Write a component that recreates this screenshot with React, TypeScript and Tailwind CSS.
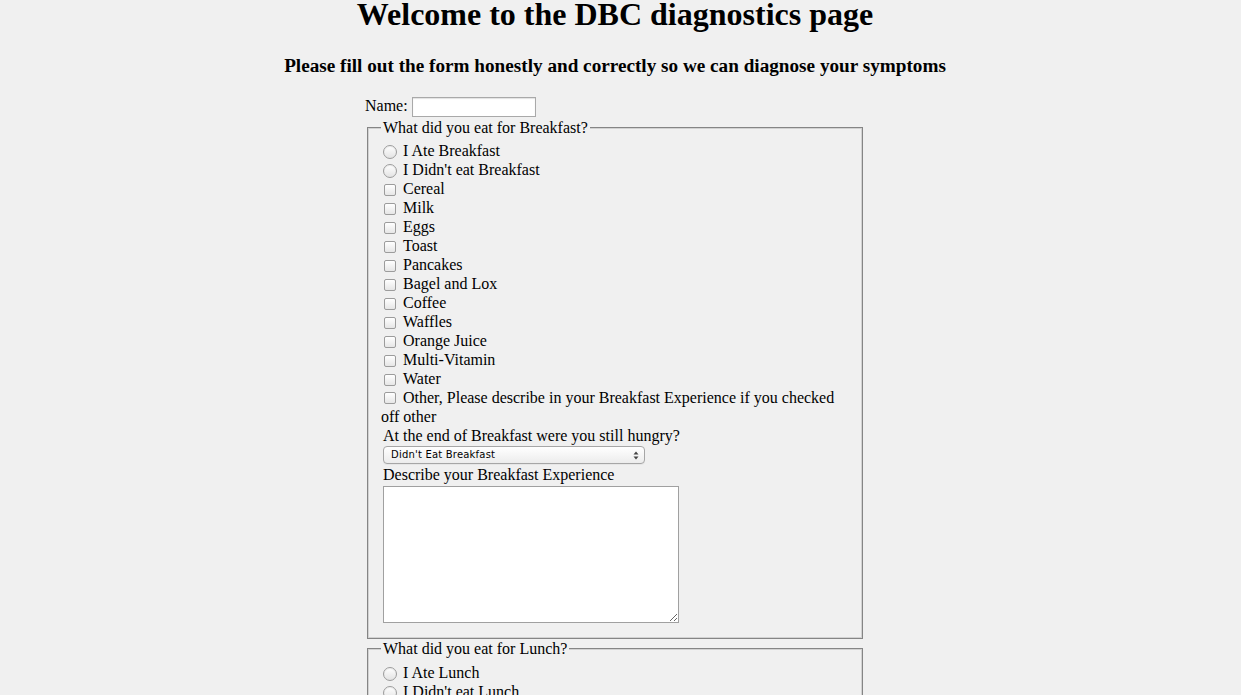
import React from "react";

const serif = { fontFamily: '"Liberation Serif", "Times New Roman", serif' };

function Radio() {
  return (
    <span className="w-[22px] h-[19px] flex items-center shrink-0">
      <span className="ml-[2px] mt-[2px] w-[14px] h-[14px] rounded-full border border-[#9c9c9c] bg-[linear-gradient(#ffffff,#e3e3e3)] shadow-[inset_0_1px_1px_rgba(0,0,0,0.08)]" />
    </span>
  );
}

function Check() {
  return (
    <span className="w-[22px] h-[19px] flex items-center shrink-0">
      <span className="ml-[3px] mt-[2px] w-[12px] h-[12px] rounded-[2px] border border-[#9c9c9c] bg-[linear-gradient(#ffffff,#e6e6e6)]" />
    </span>
  );
}

function Row({ kind, label }: { kind: "radio" | "check"; label: string }) {
  return (
    <div className="flex items-start leading-[19px]">
      {kind === "radio" ? <Radio /> : <Check />}
      <span>{label}</span>
    </div>
  );
}

const breakfastItems = [
  "Cereal",
  "Milk",
  "Eggs",
  "Toast",
  "Pancakes",
  "Bagel and Lox",
  "Coffee",
  "Waffles",
  "Orange Juice",
  "Multi-Vitamin",
  "Water",
];

const lunchItems = ["Sandwich", "Salad", "Soup", "Pizza", "Burger", "Water"];

export default function App() {
  return (
    <div
      className="w-[1241px] h-[695px] overflow-hidden bg-[#f0f0f0] text-black text-[16px]"
      style={serif}
    >
      <div className="w-[1230px]">
        <h1 className="text-center text-[32px] font-bold leading-[28px]">
          Welcome to the DBC diagnostics page
        </h1>
        <h2 className="mt-[27px] text-center text-[19.2px] font-bold leading-[22px]">
          Please fill out the form honestly and correctly so we can diagnose your symptoms
        </h2>
        <form className="w-[500px] mx-auto mt-[19px]">
          <div className="h-[22px] flex items-start leading-[19px]">
            <span>Name:</span>
            <input
              type="text"
              className="ml-[4px] mt-[1px] w-[124px] h-[20px] bg-white border border-[#a9a9a9] shadow-[inset_0_1px_1px_rgba(0,0,0,0.12)] outline-none"
            />
          </div>
          <fieldset className="mx-[2px] px-[13px] pt-[4px] pb-[15px] border border-[#858585] shadow-[inset_0_0_0_1px_#d2d2d2]">
            <legend className="px-[2px] leading-[19px] bg-[#f0f0f0]">What did you eat for Breakfast?</legend>
            <div>
              <Row kind="radio" label="I Ate Breakfast" />
              <Row kind="radio" label="I Didn't eat Breakfast" />
              {breakfastItems.map((it) => (
                <Row key={it} kind="check" label={it} />
              ))}
              <div className="leading-[19px]">
                <span className="inline-block w-[22px] h-[12px] align-[-1px] relative">
                  <span className="absolute left-[3px] top-0 w-[12px] h-[12px] rounded-[2px] border border-[#9c9c9c] bg-[linear-gradient(#ffffff,#e6e6e6)]" />
                </span>
                Other, Please describe in your Breakfast Experience if you checked off other
              </div>
              <div className="ml-[2px] leading-[19px]">At the end of Breakfast were you still hungry?</div>
              <div className="ml-[2px] mt-[1px] w-[262px] h-[18px] rounded-[4px] border border-[#a6a6a6] bg-[linear-gradient(#ffffff,#ececec)] flex items-center justify-between pl-[7px] pr-[5px] shadow-[0_1px_0_rgba(0,0,0,0.04)]">
                <span
                  className="leading-[12px] text-black tracking-[0.2px]"
                  style={{ fontFamily: '"DejaVu Sans", "Liberation Sans", Arial, sans-serif', fontSize: "10px" }}
                >
                  Didn't Eat Breakfast
                </span>
                <svg width="6" height="9" viewBox="0 0 6 9">
                  <path d="M0.5 3.5 L3 0.5 L5.5 3.5 Z" fill="#444" />
                  <path d="M0.5 5.5 L3 8.5 L5.5 5.5 Z" fill="#444" />
                </svg>
              </div>
              <div className="ml-[2px] mt-[1px] leading-[19px]">Describe your Breakfast Experience</div>
              <textarea className="block ml-[2px] mt-[2px] w-[296px] h-[137px] bg-white border border-[#a0a0a0] outline-none" />
            </div>
          </fieldset>
          <fieldset className="mx-[2px] px-[13px] pt-[5px] pb-[15px] border border-[#858585] shadow-[inset_0_0_0_1px_#d2d2d2]">
            <legend className="px-[2px] leading-[19px] bg-[#f0f0f0]">What did you eat for Lunch?</legend>
            <div>
              <Row kind="radio" label="I Ate Lunch" />
              <Row kind="radio" label="I Didn't eat Lunch" />
              {lunchItems.map((it) => (
                <Row key={it} kind="check" label={it} />
              ))}
            </div>
          </fieldset>
        </form>
      </div>
    </div>
  );
}
